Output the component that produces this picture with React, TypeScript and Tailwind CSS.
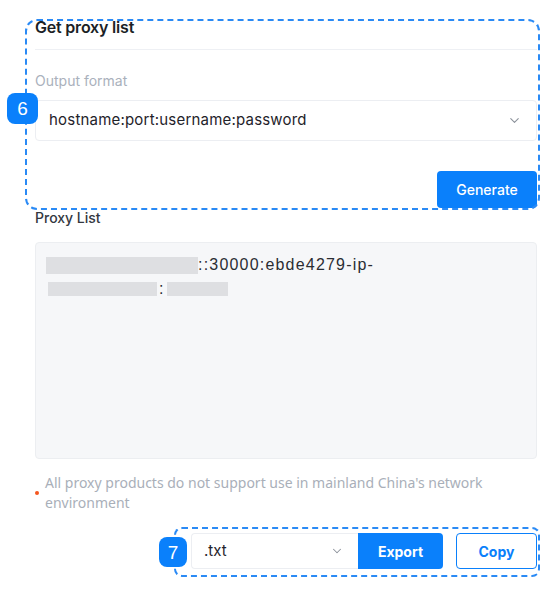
import { ChevronDown } from 'lucide-react';

const poppins = "font-['Inter','Open_Sans',sans-serif]";

function Badge({ n, className }: { n: string; className: string }) {
    return (
        <div
            className={`absolute flex items-center justify-center rounded-lg bg-[#0a80fb] text-white text-[19px] leading-none font-['Liberation_Sans',sans-serif] ${className}`}
        >
            {n}
        </div>
    );
}

function Blur({ className }: { className: string }) {
    return <span className={`inline-block align-middle bg-[#dedfe2] blur-[0.6px] ${className}`} />;
}

export default function App() {
    return (
        <div className={`w-[554px] h-[595px] bg-white pl-[35px] pr-[17px] pt-[17px] ${poppins}`}>
            {/* Get proxy list */}
            <div className="relative">
                <div className="absolute left-[-10px] right-[-3px] top-[2px] bottom-[-2px] rounded-xl border-2 border-dashed border-[#2a8af5] pointer-events-none" />
                <Badge n="6" className="left-[-28px] top-[76px] w-[31px] h-[31px]" />

                <div className="h-[33px] border-b border-[#eef0f4]">
                    <h2 className="text-[16px] leading-5 font-semibold text-[#1b1f26] tracking-[-0.2px]">Get proxy list</h2>
                </div>

                <div className="mt-[21px] text-[14px] leading-5 text-[#aab1bc]">Output format</div>

                <div className="mt-[9px] h-[41px] rounded border border-[#eceef2] flex items-center justify-between pl-[13px] pr-[14px]">
                    <span className="text-[15px] text-[#1f232a] tracking-[0.2px]">hostname:port:username:password</span>
                    <ChevronDown className="w-[15px] h-[15px] text-[#8c929b]" strokeWidth={1.75} />
                </div>

                <div className="mt-[30px] flex justify-end">
                    <button className="h-[37px] w-[100px] rounded bg-[#0a80fb] text-white text-[14px] font-medium">
                        Generate
                    </button>
                </div>
            </div>

            {/* Proxy list */}
            <div className="text-[14px] leading-5 font-medium text-[#34383f]">Proxy List</div>

            <div className="mt-[14px] h-[217px] rounded border border-[#eceef1] bg-[#f6f7f9] pl-[10px] pt-[10px] font-['Liberation_Sans',sans-serif] text-[16px] leading-6 text-[#2a2d33] tracking-[1.2px]">
                <div className="flex items-center">
                    <Blur className="w-[152px] h-[17px]" />
                    <span>::30000:ebde4279-ip-</span>
                </div>
                <div className="flex items-center pl-[2px]">
                    <Blur className="w-[109px] h-[14px]" />
                    <span className="px-[2px]">:</span>
                    <Blur className="w-[61px] h-[14px]" />
                </div>
            </div>

            <div className="mt-[14px] flex items-center gap-[6px] font-['Noto_Sans',sans-serif] text-[14px] leading-5 text-[#a9afb9]">
                <span className="w-[4px] h-[4px] rounded-full bg-[#f5561e] shrink-0" />
                <p>All proxy products do not support use in mainland China's network environment</p>
            </div>

            {/* Export row */}
            <div className="mt-[20px] flex justify-end">
                <div className="relative flex items-center">
                    <div className="absolute left-[-17px] right-[-3px] top-[-6px] bottom-[-8px] rounded-lg border-2 border-dashed border-[#2a8af5] pointer-events-none" />
                    <Badge n="7" className="left-[-32px] top-[4px] w-[28px] h-[30px]" />

                    <div className="h-[36px] w-[167px] flex items-center justify-between pl-[12px] pr-[14px] rounded-l border border-r-0 border-[#eceef2] bg-white">
                        <span className="text-[15px] text-[#1f232a]">.txt</span>
                        <ChevronDown className="w-[14px] h-[14px] text-[#8c929b]" strokeWidth={1.75} />
                    </div>
                    <button className="h-[36px] w-[85px] rounded-r bg-[#0a80fb] text-white text-[14px] font-bold">
                        Export
                    </button>
                    <button className="ml-[13px] h-[36px] w-[81px] rounded border border-[#0a80fb] bg-white text-[#0a80fb] text-[14px] font-bold">
                        Copy
                    </button>
                </div>
            </div>
        </div>
    );
}
